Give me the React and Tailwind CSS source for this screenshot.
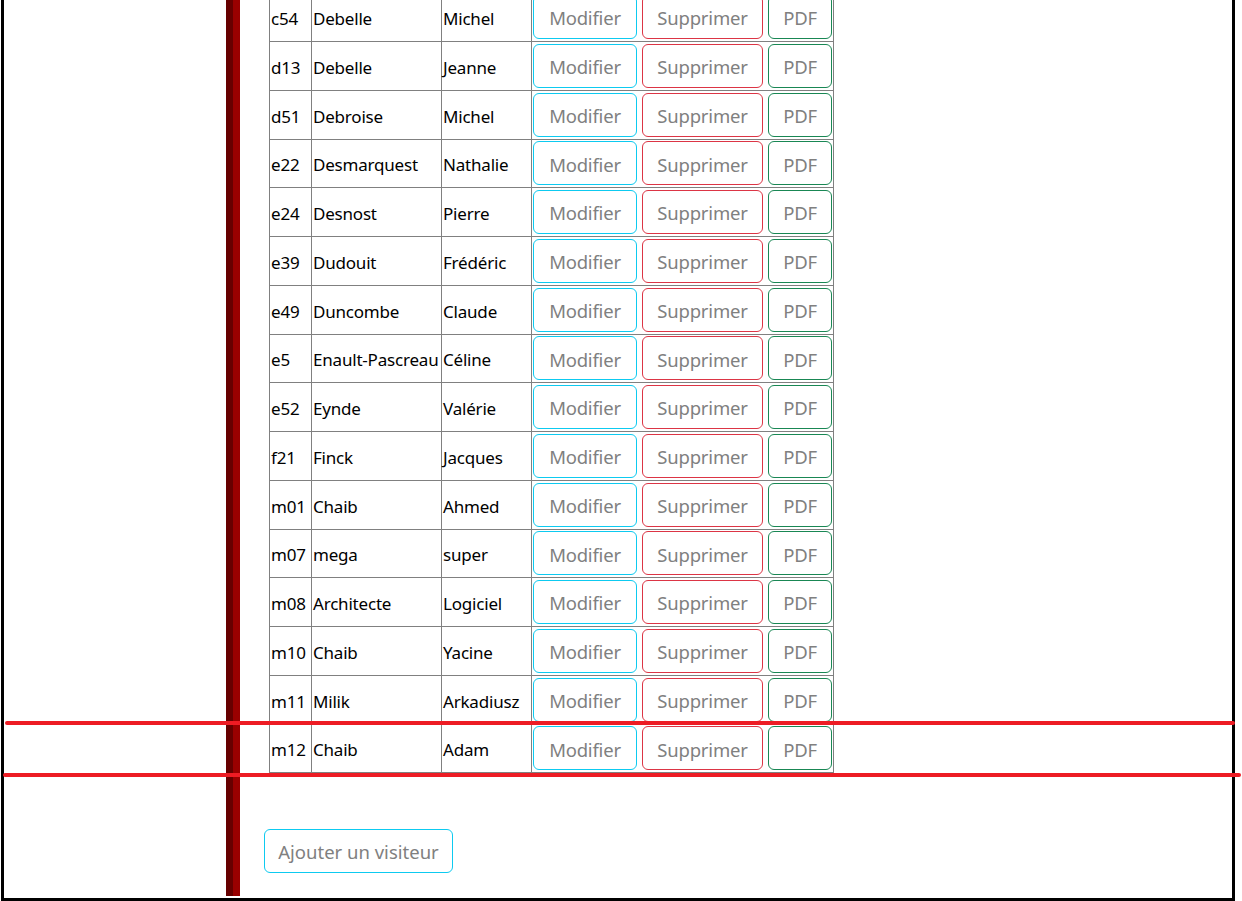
const ROWS = [
  ['c54', 'Debelle', 'Michel'],
  ['d13', 'Debelle', 'Jeanne'],
  ['d51', 'Debroise', 'Michel'],
  ['e22', 'Desmarquest', 'Nathalie'],
  ['e24', 'Desnost', 'Pierre'],
  ['e39', 'Dudouit', 'Frédéric'],
  ['e49', 'Duncombe', 'Claude'],
  ['e5', 'Enault-Pascreau', 'Céline'],
  ['e52', 'Eynde', 'Valérie'],
  ['f21', 'Finck', 'Jacques'],
  ['m01', 'Chaib', 'Ahmed'],
  ['m07', 'mega', 'super'],
  ['m08', 'Architecte', 'Logiciel'],
  ['m10', 'Chaib', 'Yacine'],
  ['m11', 'Milik', 'Arkadiusz'],
  ['m12', 'Chaib', 'Adam'],
];

const btn = 'h-[44px] pt-[3px] rounded-[6px] border bg-white text-[18.5px] text-[#808080] flex items-center justify-center';
const cell = 'border border-[#808080] px-[1px] pt-[3px] align-middle whitespace-nowrap';

function Row({ id, nom, prenom }) {
  return (
    <tr className="h-[48.75px]">
      <td className={cell}>{id}</td>
      <td className={cell}>{nom}</td>
      <td className={cell}>{prenom}</td>
      <td className="border border-[#808080] px-[1px] align-middle">
        <div className="flex gap-[5px]">
          <button className={`${btn} w-[104px] border-[#0dcaf0]`}>Modifier</button>
          <button className={`${btn} w-[121px] border-[#dc3545]`}>Supprimer</button>
          <button className={`${btn} w-[64px] border-[#198754]`}>PDF</button>
        </div>
      </td>
    </tr>
  );
}

export default function App() {
  return (
    <div className="relative h-[901px] w-[1242px] overflow-hidden bg-white font-['Noto_Sans','Open_Sans',sans-serif] text-black">
      <div className="ml-[1px] flex h-[901px] w-[1234px] border-x-[3px] border-b-[3px] border-black">
        <div className="w-[222px] shrink-0" />
        <div className="flex h-[896px] w-[14px] shrink-0">
          <div className="w-[7px] bg-[#660000]" />
          <div className="w-[7px] bg-[#990000]" />
        </div>
        <div className="flex flex-col pl-[29px] -mt-[7.75px]">
          <table className="table-fixed border-collapse text-[17px] leading-none tracking-[-0.2px]">
            <colgroup>
              <col className="w-[42px]" />
              <col className="w-[130px]" />
              <col className="w-[90px]" />
              <col className="w-[302px]" />
            </colgroup>
            <tbody>
              {ROWS.map(([id, nom, prenom]) => (
                <Row key={id} id={id} nom={nom} prenom={prenom} />
              ))}
            </tbody>
          </table>
          <button className="mt-[55.5px] -ml-[5px] h-[44px] w-[189px] pt-[3px] rounded-[6px] border border-[#0dcaf0] bg-white text-[18.5px] text-[#808080]">
            Ajouter un visiteur
          </button>
        </div>
      </div>
      {/* red annotation lines */}
      <div className="absolute left-[5px] top-[721px] h-[4px] w-[1230px] rounded-full bg-[#ed1c24]" />
      <div className="absolute left-[3px] top-[773px] h-[4px] w-[1238px] rounded-full bg-[#ed1c24]" />
    </div>
  );
}
